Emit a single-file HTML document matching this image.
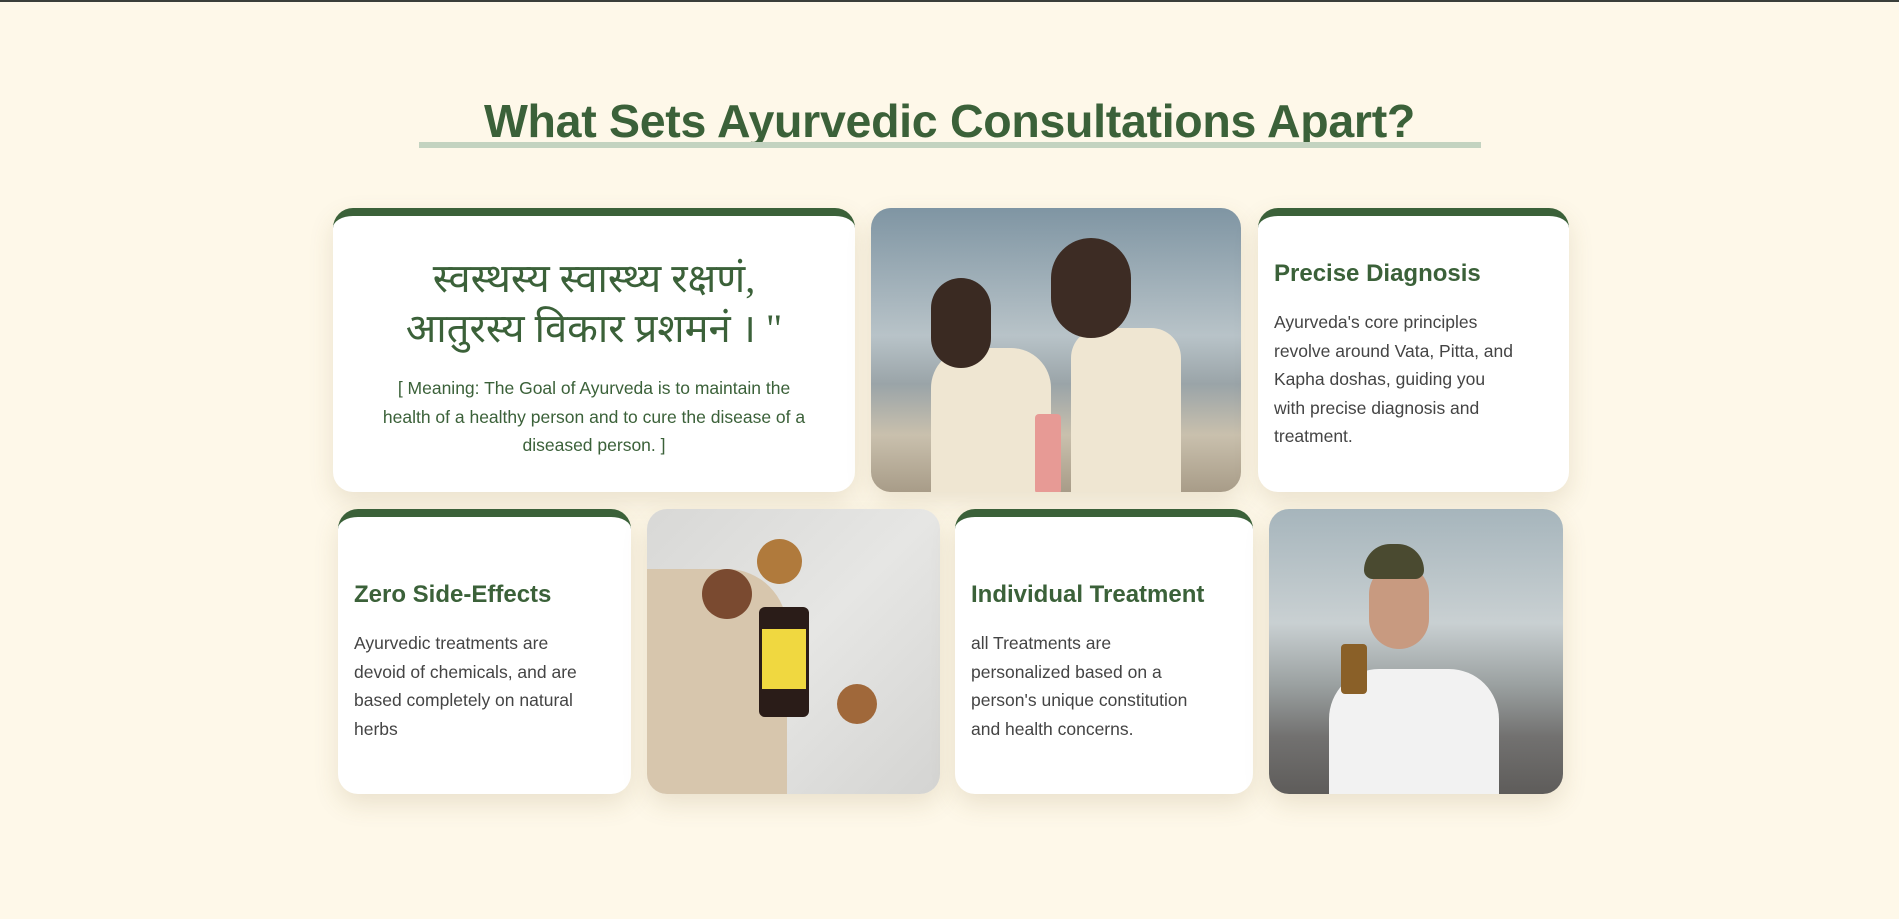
<!DOCTYPE html>
<html><head><meta charset="utf-8"><style>
*{margin:0;padding:0;box-sizing:border-box}
body{width:1899px;height:919px;background:#fef8e9;font-family:"Liberation Sans",sans-serif;position:relative;overflow:hidden;border-top:2px solid #3a3f3a}
.t{position:absolute;left:0;width:1899px;top:92px;text-align:center;font-weight:bold;font-size:46.5px;color:#3b6139;letter-spacing:-0.3px}
.bar{position:absolute;left:419px;width:1062px;top:140px;height:6px;background:#c3d3c0}
.c{position:absolute;background:#fff;border-radius:20px;box-shadow:0 10px 25px rgba(120,100,50,.15);overflow:hidden}
.g{border-top:8px solid #3b6139}
.h{font-weight:bold;font-size:24px;color:#3b6139;position:absolute;left:16px}
.p{position:absolute;left:16px;font-size:17.5px;line-height:28.5px;color:#444}
</style></head><body>
<div class="t">What Sets Ayurvedic Consultations Apart?</div>
<div class="bar"></div>

<div class="c g" style="left:333px;top:206px;width:522px;height:284px;text-align:center">
<div style="position:absolute;left:0;width:100%;top:38px;font-family:'Liberation Serif','Noto Serif CJK SC',serif;font-size:40px;line-height:50px;color:#3b6139">स्वस्थस्य स्वास्थ्य रक्षणं,<br>आतुरस्य विकार प्रशमनं । "</div>
<div style="position:absolute;left:40px;right:40px;top:158px;font-size:17.5px;line-height:28.5px;color:#3b6139">[ Meaning: The Goal of Ayurveda is to maintain the health of a healthy person and to cure the disease of a diseased person. ]</div>
</div>

<div class="c" style="left:871px;top:206px;width:370px;height:284px;background:linear-gradient(180deg,#7f95a3 0%,#b8c3c8 45%,#9aa4a8 62%,#c9c0ad 80%,#a89c88 100%)">
<div style="position:absolute;left:60px;top:140px;width:120px;height:150px;background:#efe6d2;border-radius:40px 40px 0 0"></div>
<div style="position:absolute;left:200px;top:120px;width:110px;height:170px;background:#efe6d2;border-radius:30px 30px 0 0"></div>
<div style="position:absolute;left:60px;top:70px;width:60px;height:90px;background:#3a2a22;border-radius:30px"></div>
<div style="position:absolute;left:180px;top:30px;width:80px;height:100px;background:#3d2c24;border-radius:40px"></div>
<div style="position:absolute;left:164px;top:206px;width:26px;height:80px;background:#e79a95;border-radius:4px"></div>
</div>

<div class="c g" style="left:1258px;top:206px;width:311px;height:284px">
<div class="h" style="top:44px">Precise Diagnosis</div>
<div class="p" style="top:92px;width:245px">Ayurveda's core principles revolve around Vata, Pitta, and Kapha doshas, guiding you with precise diagnosis and treatment.</div>
</div>

<div class="c g" style="left:338px;top:507px;width:293px;height:285px">
<div class="h" style="top:64px">Zero Side-Effects</div>
<div class="p" style="top:112px;width:240px">Ayurvedic treatments are devoid of chemicals, and are based completely on natural herbs</div>
</div>

<div class="c" style="left:647px;top:507px;width:293px;height:285px;background:linear-gradient(135deg,#d8d8d6,#e6e6e4 50%,#d4d4d2)">
<div style="position:absolute;left:0;top:60px;width:140px;height:240px;background:#d7c6ad;border-radius:0 60px 0 0"></div>
<div style="position:absolute;left:112px;top:98px;width:50px;height:110px;background:#2a1c18;border-radius:6px"></div>
<div style="position:absolute;left:115px;top:120px;width:44px;height:60px;background:#f0d840"></div>
<div style="position:absolute;left:55px;top:60px;width:50px;height:50px;background:#7a4a30;border-radius:50%"></div>
<div style="position:absolute;left:110px;top:30px;width:45px;height:45px;background:#b07a3c;border-radius:50%"></div>
<div style="position:absolute;left:190px;top:175px;width:40px;height:40px;background:#a0683a;border-radius:50%"></div>
</div>

<div class="c g" style="left:955px;top:507px;width:298px;height:285px">
<div class="h" style="top:64px">Individual Treatment</div>
<div class="p" style="top:112px;width:232px">all Treatments are personalized based on a person's unique constitution and health concerns.</div>
</div>

<div class="c" style="left:1269px;top:507px;width:294px;height:285px;background:linear-gradient(180deg,#a6b5bc 0%,#c9d0d2 40%,#9aa0a0 62%,#727170 80%,#5e5c5a 100%)">
<div style="position:absolute;left:60px;top:160px;width:170px;height:130px;background:#f2f2f2;border-radius:50px 50px 0 0"></div>
<div style="position:absolute;left:100px;top:55px;width:60px;height:85px;background:#c89a80;border-radius:30px"></div>
<div style="position:absolute;left:95px;top:35px;width:60px;height:35px;background:#4a4a30;border-radius:30px 30px 10px 10px"></div>
<div style="position:absolute;left:72px;top:135px;width:26px;height:50px;background:#8a6028;border-radius:4px"></div>
</div>
</body></html>
